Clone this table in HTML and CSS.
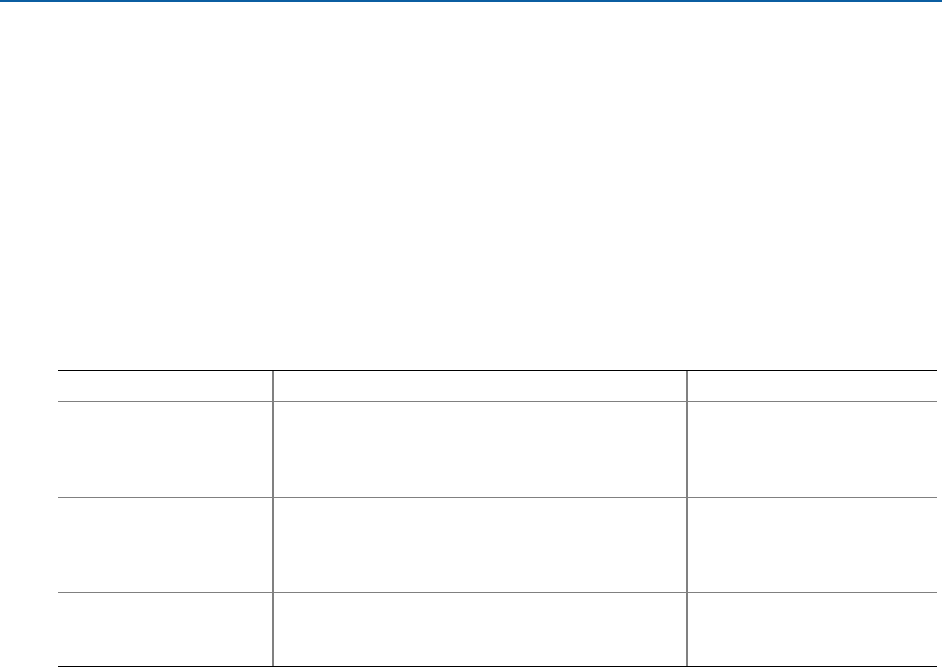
FILE: index.html
```html
<!DOCTYPE html>
<html lang="en">
<head>
  <meta charset="UTF-8">
  <meta name="viewport" content="width=device-width, initial-scale=1.0">
  <title>Table</title>
  <link rel="stylesheet" href="styles.css">
</head>
<body>
  <!-- Top rule -->
  <header class="top-bar"></header>

  <!-- Main Content -->
  <main class="content">
    <table class="data-table">
      <thead>
        <tr class="head-row">
          <th class="col-a"></th>
          <th class="col-b"></th>
          <th class="col-c"></th>
        </tr>
      </thead>
      <tbody>
        <tr class="row-1">
          <td class="col-a"></td>
          <td class="col-b"></td>
          <td class="col-c"></td>
        </tr>
        <tr class="row-2">
          <td class="col-a"></td>
          <td class="col-b"></td>
          <td class="col-c"></td>
        </tr>
        <tr class="row-3">
          <td class="col-a"></td>
          <td class="col-b"></td>
          <td class="col-c"></td>
        </tr>
      </tbody>
    </table>
  </main>
</body>
</html>
```

FILE: styles.css
```css
/* General Styles */
body {
  font-family: 'Liberation Sans', Arial, sans-serif;
  margin: 0;
  padding: 0;
  background-color: #fff;
  color: #000;
}

/* Top rule */
.top-bar {
  height: 2px;
  background-color: #0b5ea1;
}

/* Main Content */
.content {
  padding-top: 368px;
  padding-left: 58px;
}

.data-table {
  width: 879px;
  border-collapse: separate;
  border-spacing: 0;
  border-top: 1px solid #000;
  border-bottom: 1px solid #000;
  table-layout: fixed;
}

.data-table th,
.data-table td {
  box-sizing: border-box;
  padding: 0;
  border-bottom: 1px solid #808080;
  font-size: 12px;
  font-weight: normal;
  text-align: left;
  vertical-align: top;
}

.data-table .col-a {
  width: 214px;
}

.data-table .col-b {
  width: 414px;
  border-left: 2px solid #808080;
}

.data-table .col-c {
  width: 251px;
  border-left: 2px solid #808080;
}

.head-row th {
  height: 31px;
}

.row-1 td {
  height: 96px;
}

.row-2 td {
  height: 95px;
}

.row-3 td {
  height: 73px;
  border-bottom: none;
}
```
